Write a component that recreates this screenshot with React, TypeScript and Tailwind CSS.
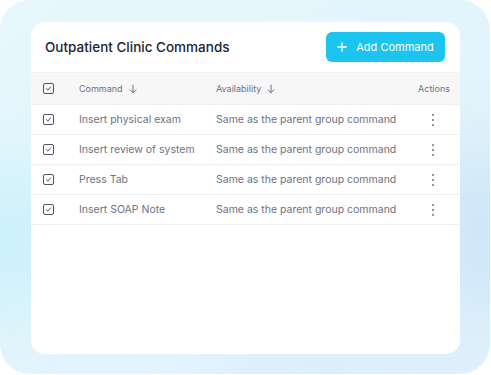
const rows = [
  "Insert physical exam",
  "Insert review of system",
  "Press Tab",
  "Insert SOAP Note",
];

function Check() {
  return (
    <span className="flex h-[11px] w-[11px] items-center justify-center rounded-[2px] border border-[#4b5563]">
      <svg viewBox="0 0 10 10" className="h-[7px] w-[7px]" fill="none" stroke="#4b5563" strokeWidth="1.4" strokeLinecap="round" strokeLinejoin="round">
        <path d="M2 5.2 4.2 7.3 8 2.8" />
      </svg>
    </span>
  );
}

function Arrow() {
  return (
    <svg viewBox="0 0 12 12" className="h-[10px] w-[10px]" fill="none" stroke="#6b7280" strokeWidth="1.2" strokeLinecap="round" strokeLinejoin="round">
      <path d="M6 1.5v9M2.5 7 6 10.5 9.5 7" />
    </svg>
  );
}

function Dots() {
  return (
    <span className="flex flex-col items-center gap-[3px]">
      <span className="h-[2px] w-[2px] rounded-full bg-[#6b7280]" />
      <span className="h-[2px] w-[2px] rounded-full bg-[#6b7280]" />
      <span className="h-[2px] w-[2px] rounded-full bg-[#6b7280]" />
    </span>
  );
}

export default function App() {
  return (
    <div className="h-[375px] w-[491px] bg-white font-['Inter',sans-serif]">
      <div className="relative h-[374px] w-[490px] overflow-hidden rounded-[30px] bg-gradient-to-br from-[#e6f7fd] via-[#e3f5fc] to-[#e0f1fb] pl-[31px] pr-[30px] pt-[22px]">
        {/* soft glows */}
        <div className="absolute left-[-60px] top-[170px] h-[140px] w-[140px] rounded-full bg-[#bdeef9]/70 blur-2xl" />
        <div className="absolute right-[-60px] top-[150px] h-[160px] w-[140px] rounded-full bg-[#c8e2f8]/80 blur-2xl" />
        <div className="absolute bottom-[-40px] left-[240px] h-[60px] w-[160px] rounded-full bg-[#d2eaf9]/80 blur-2xl" />

        <div className="relative h-[332px] w-[429px] overflow-hidden rounded-[14px] bg-white">
          {/* Header */}
          <div className="flex h-[50px] items-center justify-between pl-[14px] pr-[15px]">
            <h1 className="text-[13.5px] font-medium text-[#1d2433]">Outpatient Clinic Commands</h1>
            <button className="flex h-[30px] w-[119px] items-center justify-center gap-[9px] rounded-[6px] bg-[#1cc4f0] text-[11px] text-white">
              <svg viewBox="0 0 12 12" className="h-[10px] w-[10px]" fill="none" stroke="white" strokeWidth="1.6" strokeLinecap="round">
                <path d="M6 1v10M1 6h10" />
              </svg>
              Add Command
            </button>
          </div>

          {/* Table header */}
          <div className="flex h-[33px] items-center border-y border-[#eef0f2] bg-[#f7f7f8] pl-[12px] pr-[10px] text-[9px] text-[#6b7280]">
            <div className="w-[36px]">
              <Check />
            </div>
            <div className="flex w-[137px] items-center gap-[5px]">
              Command <Arrow />
            </div>
            <div className="flex flex-1 items-center gap-[5px]">
              Availability <Arrow />
            </div>
            <div>Actions</div>
          </div>

          {/* Rows */}
          {rows.map((r) => (
            <div key={r} className="flex h-[30px] items-center border-b border-[#eef0f2] pl-[12px] pr-[10px] text-[10.5px] text-[#6b7280]">
              <div className="w-[36px]">
                <Check />
              </div>
              <div className="w-[137px]">{r}</div>
              <div className="flex-1">Same as the parent group command</div>
              <div className="mr-[3px] flex w-[28px] justify-center">
                <Dots />
              </div>
            </div>
          ))}
        </div>
      </div>
    </div>
  );
}
